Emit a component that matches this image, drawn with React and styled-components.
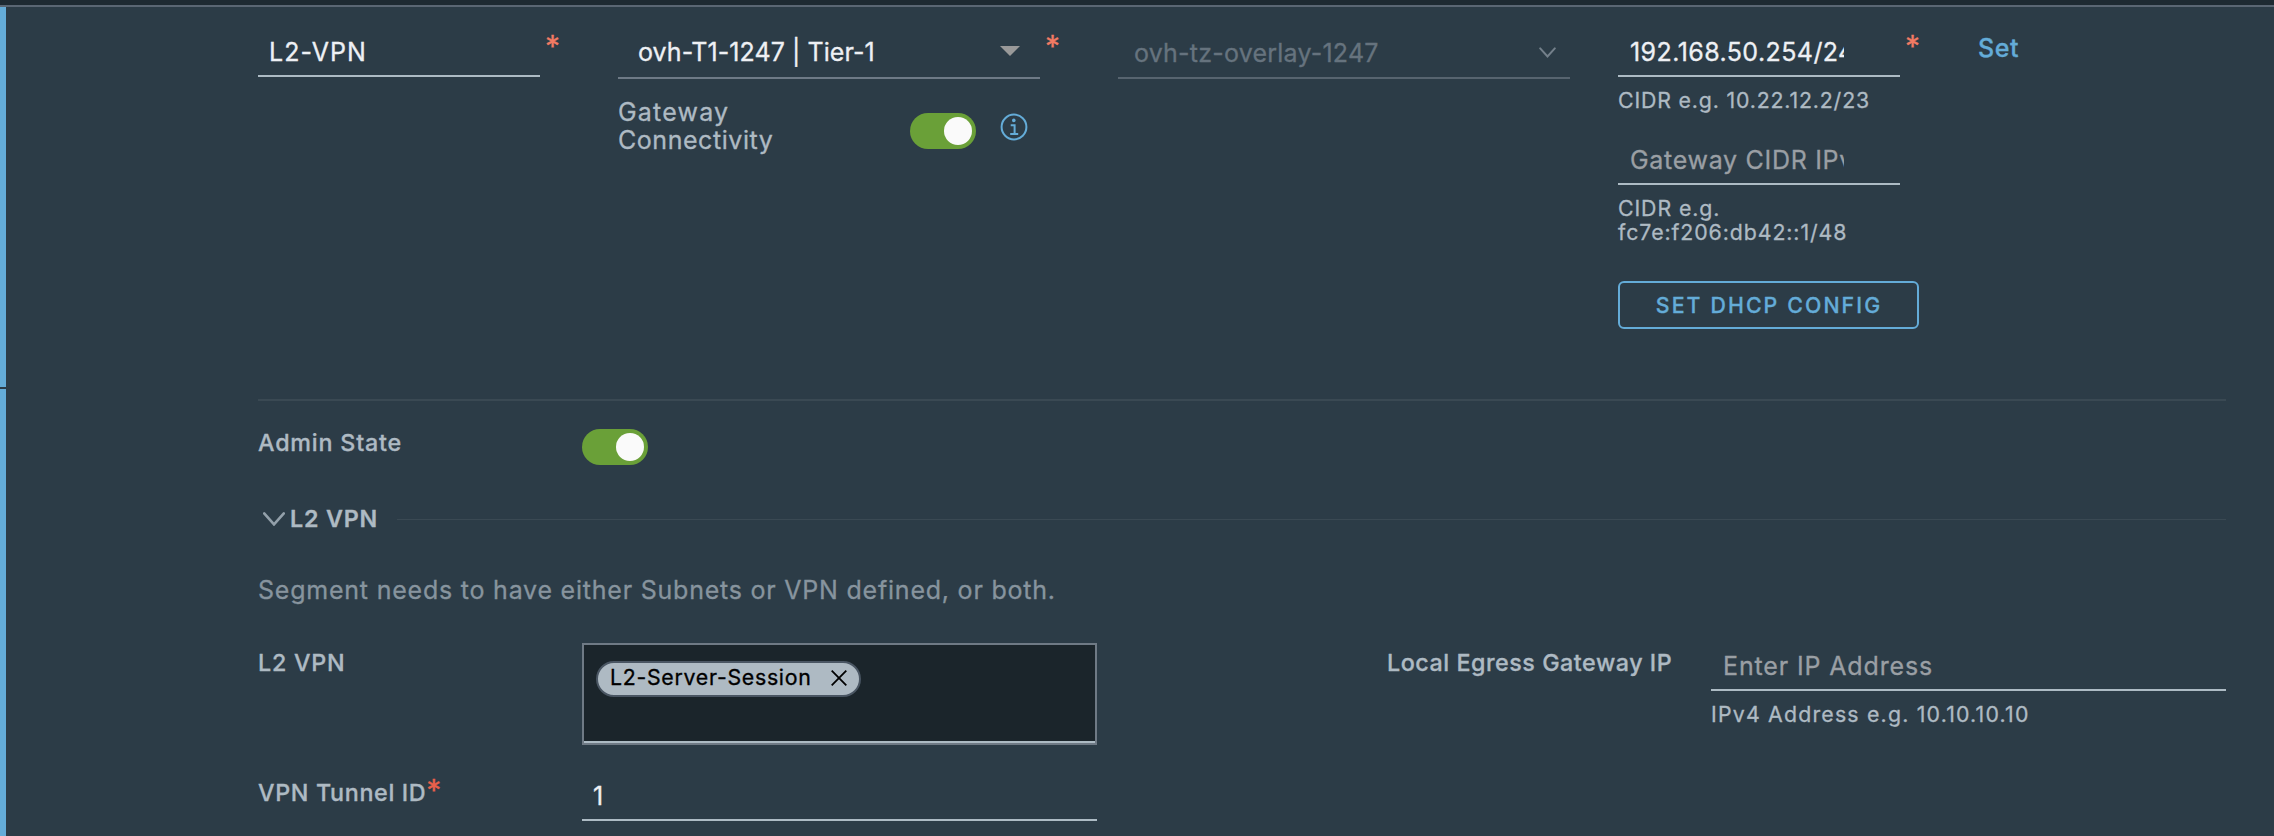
import React from 'react';
import styled, { createGlobalStyle } from 'styled-components';

const c = {
  page: '#2c3c47',
  top: '#1e2a32',
  line: '#5a6673',
  accent: '#64acd8',
  white: '#eef0f4',
  label: '#aebac3',
  control: '#adbbc4',
  muted: '#87949e',
  placeholder: '#9a9fa4',
  disabled: '#66737e',
  divider: '#3a4953',
  required: '#f27a63',
  green: '#6aa038',
};

const GlobalStyle = createGlobalStyle`
  *, *::before, *::after { box-sizing: border-box; }
  body {
    margin: 0;
    background: ${c.page};
    color: ${c.label};
    font-family: Inter, "Liberation Sans", sans-serif;
    -webkit-text-stroke: 0.3px currentColor;
  }
  button { font-family: inherit; }
`;

const Page = styled.main`
  display: flex;
  flex-direction: column;
  gap: 2px;
  height: 836px;
  overflow: hidden;
`;

const Record = styled.section`
  height: 387px;
  border-top: 5px solid ${c.top};
`;

const RecordBody = styled.div`
  height: 382px;
  border-top: 2px solid ${c.line};
`;

const Rail = styled.div`
  height: 100%;
  border-left: 6px solid ${c.accent};
`;

const Columns = styled.div`
  display: grid;
  grid-template-columns: 360px 500px 500px 360px 200px;
  padding: 24px 0 0 252px;
`;

const Details = styled.section`
  flex: 1;
  border-left: 6px solid ${c.accent};
  padding: 10px 48px 0 252px;
`;

const Field = styled.div`
  display: flex;
  align-items: flex-start;
`;

const Input = styled.div`
  flex: none;
  width: ${(p) => p.$width}px;
  height: 46px;
  padding: 6px ${(p) => p.$right || 11}px 0 ${(p) => p.$left || 11}px;
  border-bottom: 2px solid ${c.control};
`;

const Value = styled.div`
  overflow: hidden;
  white-space: nowrap;
  font-size: 25px;
  line-height: 30px;
  letter-spacing: ${(p) => p.$spacing || 0}px;
  color: ${(p) => (p.$placeholder ? c.placeholder : c.white)};
`;

const Select = styled.div`
  flex: none;
  display: flex;
  justify-content: space-between;
  width: ${(p) => p.$width}px;
  height: 48px;
  padding: ${(p) => (p.$disabled ? '7px 14px 0 16px' : '6px 20px 0 20px')};
  border-bottom: 2px solid ${(p) => (p.$disabled ? '#57646f' : '#6e7a86')};
  font-size: 25px;
  line-height: 30px;
  letter-spacing: ${(p) => p.$spacing}px;
  color: ${(p) => (p.$disabled ? c.disabled : c.white)};
`;

const Icon = styled.svg`
  flex: none;
  display: block;
  margin-top: ${(p) => p.$top || 0}px;
`;

const Required = styled.span`
  flex: none;
  margin-left: ${(p) => (p.$label ? 0 : 5)}px;
  margin-top: ${(p) => (p.$label ? -5 : -1)}px;
  font-size: 30px;
  line-height: 32px;
  height: 28px;
  color: ${(p) => (p.$label ? '#e8604b' : c.required)};
`;

const Helper = styled.div`
  margin-top: 11px;
  width: 282px;
  white-space: nowrap;
  font-size: 21.3px;
  line-height: 24px;
  letter-spacing: ${(p) => p.$spacing}px;
  color: ${c.label};
`;

const SecondInput = styled.div`
  margin-top: 27px;
`;

const Connectivity = styled.div`
  display: flex;
  margin-top: 19px;
`;

const ConnectivityLabel = styled.div`
  width: 292px;
  font-size: 25px;
  line-height: 28px;
`;

const Word = styled.div`
  letter-spacing: ${(p) => p.$spacing}px;
`;

const Switch = styled.div`
  flex: none;
  display: flex;
  justify-content: flex-end;
  width: 66px;
  height: 36px;
  margin-top: ${(p) => p.$top || 0}px;
  margin-right: 24px;
  padding: 4px;
  border-radius: 18px;
  background: ${c.green};
`;

const Knob = styled.div`
  width: 28px;
  height: 28px;
  border-radius: 50%;
  background: #fafafa;
`;

const OutlineButton = styled.button`
  display: block;
  width: 301px;
  height: 48px;
  margin-top: 37px;
  padding: 0 0 0 1px;
  border: 2px solid ${c.accent};
  border-radius: 6px;
  background: transparent;
  color: ${c.accent};
  font-size: 21.3px;
  font-weight: 500;
  line-height: 44px;
  letter-spacing: 2.12px;
`;

const Link = styled.a`
  display: block;
  margin-top: 2px;
  font-size: 25px;
  font-weight: 500;
  line-height: 30px;
  letter-spacing: 0.58px;
  color: ${c.accent};
`;

const Divider = styled.hr`
  height: 2px;
  margin: 0;
  border: 0;
  background: ${c.divider};
`;

const AdminRow = styled.div`
  display: flex;
  margin-top: 28px;
`;

const LabelCell = styled.div`
  flex: none;
  display: flex;
  width: 324px;
  padding-top: ${(p) => p.$top || 0}px;
`;

const Label = styled.span`
  white-space: nowrap;
  font-size: 23.3px;
  font-weight: 500;
  line-height: 28px;
  letter-spacing: ${(p) => p.$spacing}px;
`;

const SectionHeader = styled.div`
  display: flex;
  align-items: flex-start;
  height: 28px;
  margin-top: 39px;
  padding-left: 5px;
`;

const SectionTitle = styled.h2`
  margin: 1px 19px 0 5px;
  font-size: 23.3px;
  font-weight: 600;
  line-height: 28px;
  letter-spacing: 0.8px;
`;

const SectionRule = styled.div`
  flex: 1;
  height: 1px;
  margin-top: 15px;
  background: ${c.divider};
`;

const Note = styled.p`
  margin: 43px 0 38px;
  font-size: 25px;
  line-height: 30px;
  letter-spacing: 0.78px;
  color: ${c.muted};
`;

const FormRow = styled.div`
  display: flex;
  align-items: flex-start;
  margin-top: ${(p) => p.$top || 0}px;
`;

const TagBox = styled.div`
  flex: none;
  width: 515px;
  height: 102px;
  margin-right: 290px;
  border: 2px solid #6f7a85;
`;

const TagBoxInner = styled.div`
  height: 98px;
  padding: 16px 0 0 12px;
  border-bottom: 2px solid ${c.control};
  background: #1b252b;
`;

const Tag = styled.div`
  display: flex;
  align-items: flex-start;
  justify-content: space-between;
  width: 265px;
  height: 36px;
  padding: 2px 12px 0 12px;
  border: 2px solid #4a5663;
  border-radius: 18px;
  background: #aebac3;
  font-size: 21.3px;
  line-height: 24px;
  letter-spacing: 0.72px;
  color: #000;
`;

const EgressField = styled.div`
  margin-top: 2px;
`;

function Toggle({ top }) {
  return (
    <Switch $top={top} role="switch" aria-checked="true">
      <Knob />
    </Switch>
  );
}

function Chevron({ width, height, stroke, color, top }) {
  return (
    <Icon $top={top} width={width} height={height} viewBox={`0 0 ${width} ${height}`} fill="none">
      <path
        d={`M1.2 1.4L${width / 2} ${height - 1.6}L${width - 1.2} 1.4`}
        stroke={color}
        strokeWidth={stroke}
        strokeLinecap="round"
      />
    </Icon>
  );
}

function InfoIcon() {
  return (
    <Icon $top={15} width="28" height="28" viewBox="0 0 28 28" fill="none">
      <circle cx="14" cy="14" r="12.4" stroke={c.accent} strokeWidth="2" />
      <circle cx="13.8" cy="7.4" r="1.8" fill={c.accent} />
      <path d="M10.7 12.2H14.6V21M10.2 21H18.2" stroke={c.accent} strokeWidth="2" />
    </Icon>
  );
}

export default function App() {
  return (
    <>
      <GlobalStyle />
      <Page>
        <Record>
          <RecordBody>
            <Rail>
              <Columns>
                <Field>
                  <Input $width={282}>
                    <Value $spacing={1.05}>L2-VPN</Value>
                  </Input>
                  <Required>*</Required>
                </Field>
                <div>
                  <Field>
                    <Select $width={422} $spacing={0.06}>
                      ovh-T1-1247 | Tier-1
                      <Icon $top={9} width="20" height="10" viewBox="0 0 20 10">
                        <path d="M0 0H20L10 10Z" fill="#999" />
                      </Icon>
                    </Select>
                    <Required>*</Required>
                  </Field>
                  <Connectivity>
                    <ConnectivityLabel>
                      <Word $spacing={1.19}>Gateway</Word>
                      <Word $spacing={0.55}>Connectivity</Word>
                    </ConnectivityLabel>
                    <Toggle top={15} />
                    <InfoIcon />
                  </Connectivity>
                </div>
                <Select $width={452} $spacing={0.22} $disabled>
                  ovh-tz-overlay-1247
                  <Chevron width={17} height={11} stroke={2} color="#74808b" top={9} />
                </Select>
                <div>
                  <Field>
                    <Input $width={282} $left={12} $right={56}>
                      <Value $spacing={0.42}>192.168.50.254/24</Value>
                    </Input>
                    <Required>*</Required>
                  </Field>
                  <Helper $spacing={0.84}>CIDR e.g. 10.22.12.2/23</Helper>
                  <SecondInput>
                    <Input $width={282} $left={12} $right={56}>
                      <Value $placeholder $spacing={0.7}>Gateway CIDR IPv4</Value>
                    </Input>
                  </SecondInput>
                  <Helper $spacing={0.92}>
                    CIDR e.g.
                    <br />
                    fc7e:f206:db42::1/48
                  </Helper>
                  <OutlineButton type="button">SET DHCP CONFIG</OutlineButton>
                </div>
                <Link>Set</Link>
              </Columns>
            </Rail>
          </RecordBody>
        </Record>

        <Details>
          <Divider />
          <AdminRow>
            <LabelCell>
              <Label $spacing={0.8}>Admin State</Label>
            </LabelCell>
            <Toggle />
          </AdminRow>

          <SectionHeader>
            <Chevron width={22} height={14} stroke={2.6} color="#93a0aa" top={8} />
            <SectionTitle>L2 VPN</SectionTitle>
            <SectionRule />
          </SectionHeader>

          <Note>Segment needs to have either Subnets or VPN defined, or both.</Note>

          <FormRow>
            <LabelCell $top={6}>
              <Label $spacing={0.75}>L2 VPN</Label>
            </LabelCell>
            <TagBox>
              <TagBoxInner>
                <Tag>
                  L2-Server-Session
                  <Icon $top={5} width="16" height="16" viewBox="0 0 16 16">
                    <path d="M0.7 0.7L15.3 15.3M15.3 0.7L0.7 15.3" stroke="#000" strokeWidth="1.8" />
                  </Icon>
                </Tag>
              </TagBoxInner>
            </TagBox>
            <LabelCell $top={6}>
              <Label $spacing={0.53}>Local Egress Gateway IP</Label>
            </LabelCell>
            <EgressField>
              <Input $width={515} $left={12}>
                <Value $placeholder $spacing={0.86}>Enter IP Address</Value>
              </Input>
              <Helper $spacing={1.2}>IPv4 Address e.g. 10.10.10.10</Helper>
            </EgressField>
          </FormRow>

          <FormRow $top={30}>
            <LabelCell $top={4}>
              <Label $spacing={0.66}>VPN Tunnel ID</Label>
              <Required $label>*</Required>
            </LabelCell>
            <Input $width={515}>
              <Value>1</Value>
            </Input>
          </FormRow>
        </Details>
      </Page>
    </>
  );
}
